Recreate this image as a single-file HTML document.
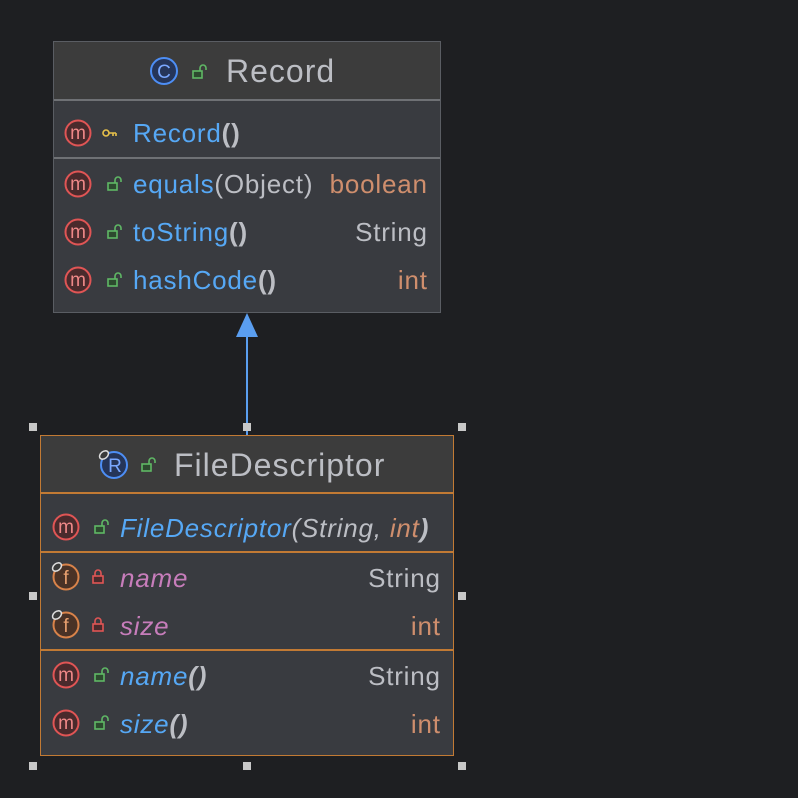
<!DOCTYPE html>
<html><head><style>
html,body{margin:0;padding:0}
body{width:798px;height:798px;background:#1e1f22;position:relative;overflow:hidden;font-family:"Liberation Sans",sans-serif}
.a{position:absolute}
.box{position:absolute;box-sizing:border-box}
.t{position:absolute;font-size:26px;letter-spacing:0.8px;line-height:26px;white-space:nowrap}
.r{margin-right:-0.8px}
.bl{color:#56a8f5}.gr{color:#bcbec4}.or{color:#cf8e6d}.pk{color:#c77dbb}
.h{position:absolute;width:8px;height:8px;background:#c8c8c8}
i{font-style:italic}
.ti{position:absolute;font-size:32px;letter-spacing:1px;line-height:34px;color:#bcbec4;white-space:nowrap}
</style></head><body>
<div class="box" style="left:53px;top:41px;width:388px;height:272px;border:1px solid #5a5d63;background:#393b40"></div>
<div class="a" style="left:54px;top:42px;width:386px;height:57px;background:#3c3c3c"></div>
<div class="a" style="left:54px;top:99px;width:386px;height:2px;background:#6f7175"></div>
<div class="a" style="left:54px;top:157px;width:386px;height:2px;background:#6f7175"></div>
<svg class="a" style="left:0;top:0" width="798" height="798">
<defs>
<g id="m"><circle r="12.5" fill="#4a2a2c" stroke="#e05555" stroke-width="2"/><text x="0" y="6" font-size="19" text-anchor="middle" fill="#e88" font-family="Liberation Sans">m</text></g>
<g id="lk"><rect x="-6" y="-1" width="9" height="7" fill="#2d4a2f" stroke="#5fb865" stroke-width="1.6"/><path d="M1 -1 V-4 a3 3 0 0 1 6 0 V-2" fill="none" stroke="#5fb865" stroke-width="1.6"/></g>
<g id="rl"><rect x="-5" y="-1" width="10" height="7" fill="#4a2a2c" stroke="#e05555" stroke-width="1.6"/><path d="M-3 -1 V-4 a3 3 0 0 1 6 0 V-1" fill="none" stroke="#e05555" stroke-width="1.6"/></g>
<g id="f"><circle r="12.5" fill="#4a3226" stroke="#d9834a" stroke-width="2"/><text x="0" y="7" font-size="19" text-anchor="middle" fill="#e8a070" font-family="Liberation Sans">f</text><ellipse cx="-9" cy="-10" rx="5" ry="3.5" transform="rotate(-40 -9 -10)" fill="#3a3a3a" stroke="#ddd" stroke-width="1.5"/></g>
</defs>
<circle cx="164" cy="71" r="13" fill="#253559" stroke="#4d8ef5" stroke-width="2"/>
<text x="164" y="78" font-size="19" text-anchor="middle" fill="#7aa8ff" font-family="Liberation Sans">C</text>
<use href="#lk" x="199" y="72"/>
<use href="#m" x="78" y="133"/>
<g transform="translate(110,133)"><circle cx="-4" cy="0" r="3" fill="none" stroke="#e8c14a" stroke-width="1.6"/><path d="M-1 0 H6 M3 0 V3 M6 0 V3" stroke="#e8c14a" stroke-width="1.6" fill="none"/></g>
<use href="#m" x="78" y="184"/><use href="#lk" x="114" y="184"/>
<use href="#m" x="78" y="232"/><use href="#lk" x="114" y="232"/>
<use href="#m" x="78" y="280"/><use href="#lk" x="114" y="280"/>
<line x1="247" y1="336" x2="247" y2="435" stroke="#5a9ef0" stroke-width="2"/>
<polygon points="247,313 236,337 258,337" fill="#5a9ef0"/>
</svg>
<div class="ti" style="left:226px;top:54px">Record</div>
<div class="t bl" style="left:133px;top:120px">Record<span class="gr" style="font-weight:bold">()</span></div>
<div class="t bl" style="left:133px;top:171px">equals<span class="gr">(Object)</span></div>
<div class="t or r" style="right:371px;top:171px">boolean</div>
<div class="t bl" style="left:133px;top:219px">toString<span class="gr" style="font-weight:bold">()</span></div>
<div class="t gr r" style="right:371px;top:219px">String</div>
<div class="t bl" style="left:133px;top:267px">hashCode<span class="gr" style="font-weight:bold">()</span></div>
<div class="t or r" style="right:371px;top:267px">int</div>

<div class="box" style="left:40px;top:435px;width:414px;height:321px;border:1px solid #c27a34;background:#393b40"></div>
<div class="a" style="left:41px;top:436px;width:412px;height:57px;background:#3c3c3c"></div>
<div class="a" style="left:41px;top:492px;width:412px;height:2px;background:#c27a34"></div>
<div class="a" style="left:41px;top:551px;width:412px;height:2px;background:#c27a34"></div>
<div class="a" style="left:41px;top:649px;width:412px;height:2px;background:#c27a34"></div>
<svg class="a" style="left:0;top:0" width="798" height="798">
<defs>
<g id="m2"><circle r="12.5" fill="#4a2a2c" stroke="#e05555" stroke-width="2"/><text x="0" y="6" font-size="19" text-anchor="middle" fill="#e88" font-family="Liberation Sans">m</text></g>
<g id="lk2"><rect x="-6" y="-1" width="9" height="7" fill="#2d4a2f" stroke="#5fb865" stroke-width="1.6"/><path d="M1 -1 V-4 a3 3 0 0 1 6 0 V-2" fill="none" stroke="#5fb865" stroke-width="1.6"/></g>
</defs>
<circle cx="114" cy="465" r="13" fill="#253559" stroke="#4d8ef5" stroke-width="2"/>
<text x="115" y="472" font-size="19" text-anchor="middle" fill="#7aa8ff" font-family="Liberation Sans">R</text>
<ellipse cx="104" cy="455" rx="5" ry="3.5" transform="rotate(-40 104 455)" fill="#3a3a3a" stroke="#ddd" stroke-width="1.5"/>
<use href="#lk2" x="148" y="465"/>
<use href="#m2" x="66" y="527"/><use href="#lk2" x="101" y="527"/>
<use href="#f" x="66" y="577"/><use href="#rl" x="98" y="577"/>
<use href="#f" x="66" y="625"/><use href="#rl" x="98" y="625"/>
<use href="#m2" x="66" y="675"/><use href="#lk2" x="101" y="675"/>
<use href="#m2" x="66" y="723"/><use href="#lk2" x="101" y="723"/>
</svg>
<div class="ti" style="left:174px;top:448px">FileDescriptor</div>
<div class="t bl" style="left:120px;top:515px"><i>FileDescriptor</i><i class="gr">(String, </i><i class="or">int</i><i class="gr" style="font-weight:bold">)</i></div>
<div class="t pk" style="left:120px;top:565px"><i>name</i></div>
<div class="t gr r" style="right:358px;top:565px">String</div>
<div class="t pk" style="left:120px;top:613px"><i>size</i></div>
<div class="t or r" style="right:358px;top:613px">int</div>
<div class="t bl" style="left:120px;top:663px"><i>name</i><i class="gr" style="font-weight:bold">()</i></div>
<div class="t gr r" style="right:358px;top:663px">String</div>
<div class="t bl" style="left:120px;top:711px"><i>size</i><i class="gr" style="font-weight:bold">()</i></div>
<div class="t or r" style="right:358px;top:711px">int</div>

<div class="h" style="left:29px;top:423px"></div>
<div class="h" style="left:243px;top:423px"></div>
<div class="h" style="left:458px;top:423px"></div>
<div class="h" style="left:29px;top:592px"></div>
<div class="h" style="left:458px;top:592px"></div>
<div class="h" style="left:29px;top:762px"></div>
<div class="h" style="left:243px;top:762px"></div>
<div class="h" style="left:458px;top:762px"></div>
</body></html>
